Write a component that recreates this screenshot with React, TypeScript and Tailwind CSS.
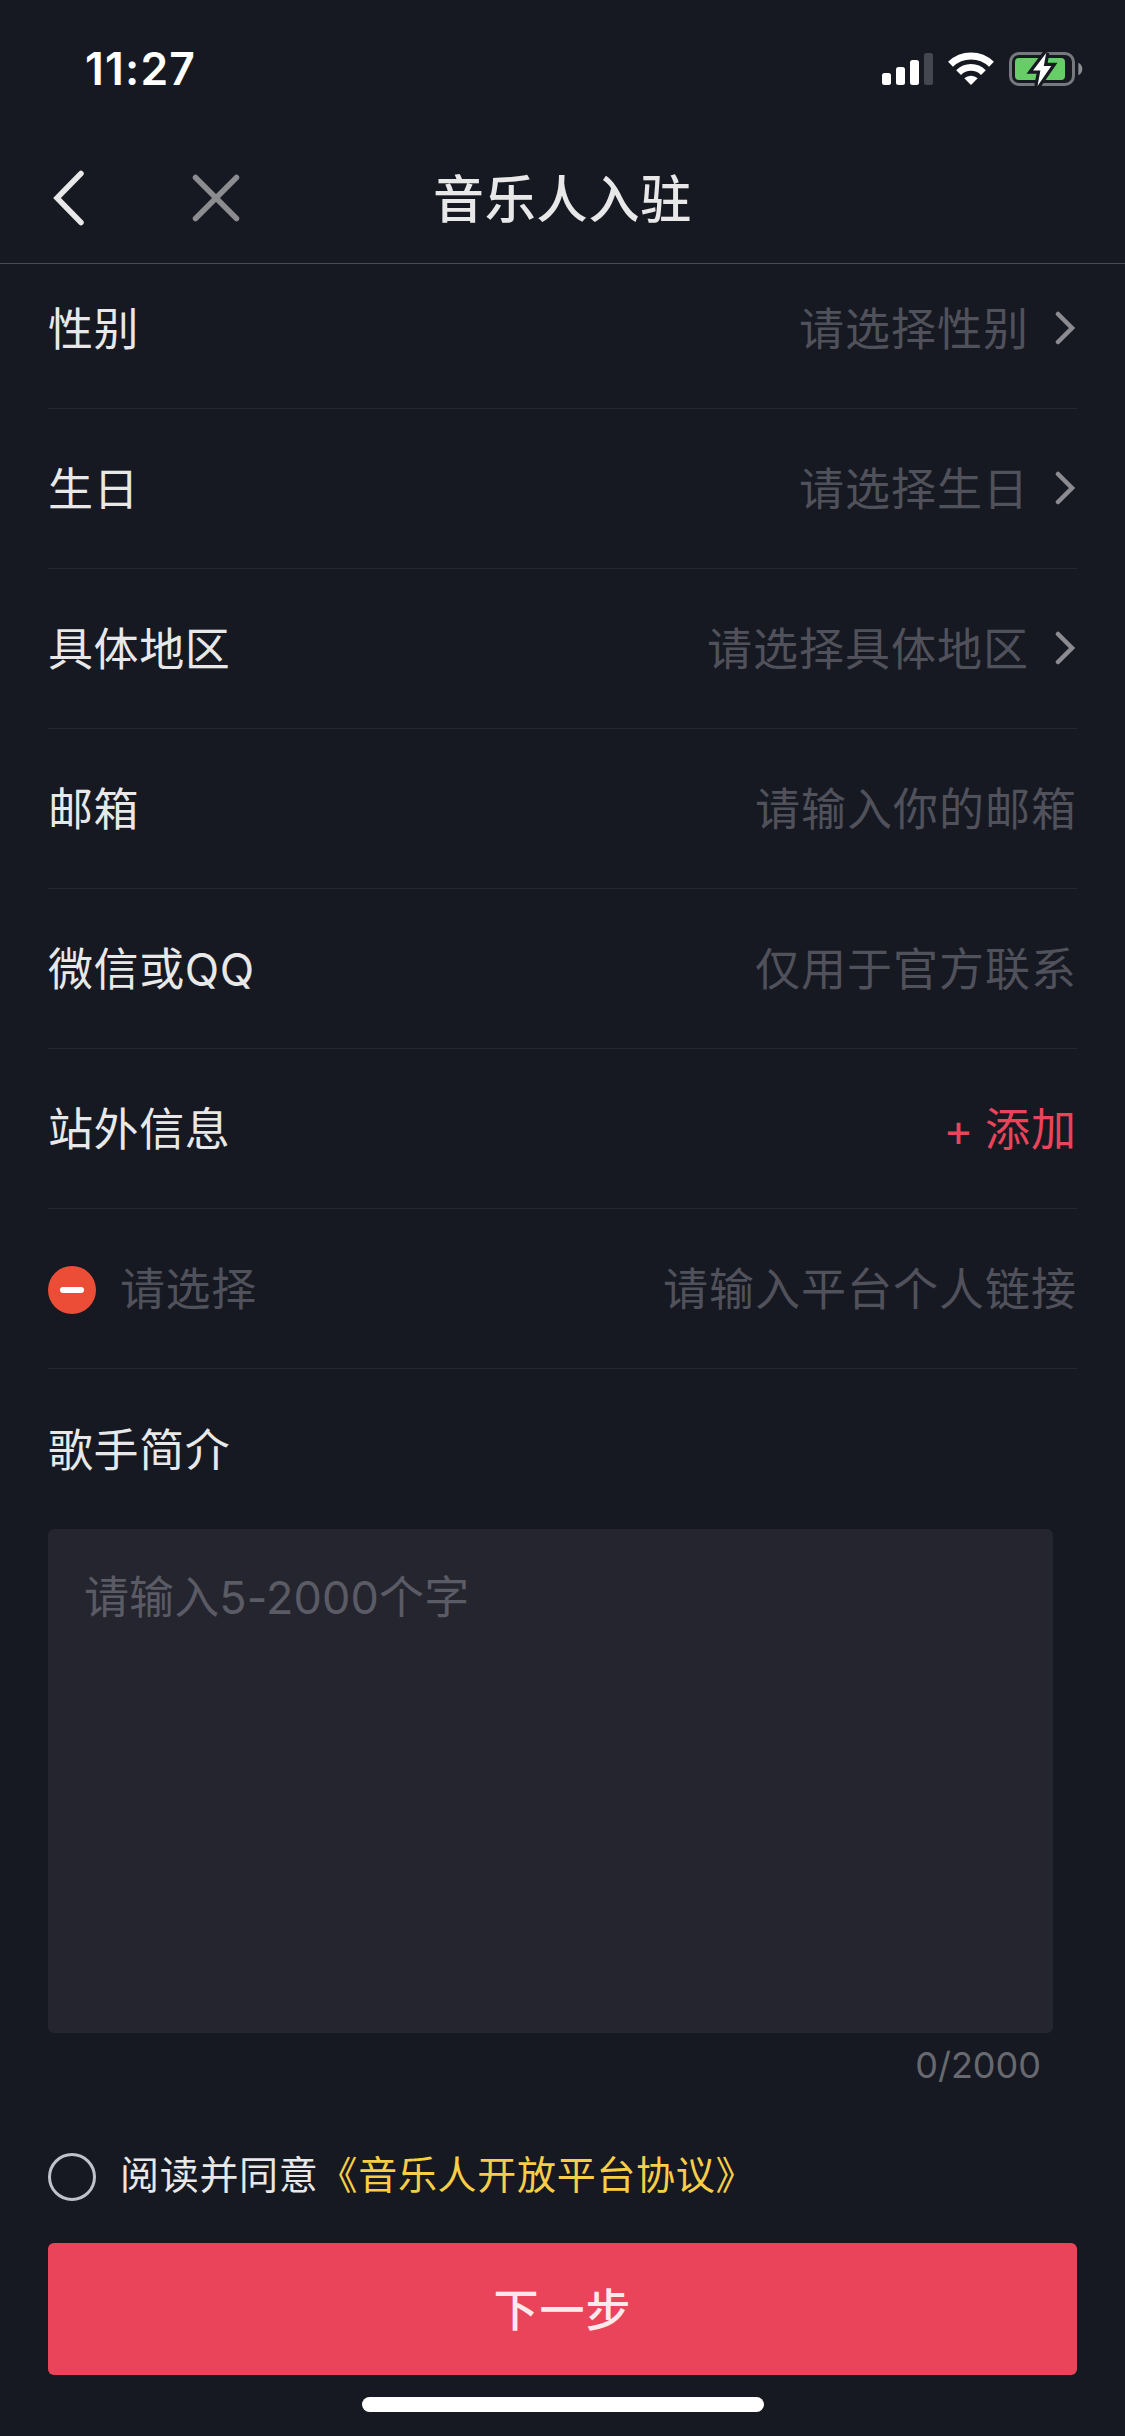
import { useState } from 'react';
import type { ReactNode } from 'react';

const MAX_LENGTH = 2000;

interface FormRowProps {
  label: string;
  children: ReactNode;
}

interface TextFieldProps {
  name: string;
  placeholder: string;
}

function StatusIcons() {
  return (
    <svg width="204" height="36" viewBox="881 51 204 36" fill="none">
      {/* Signal */}
      <rect x="882" y="73" width="9" height="12" rx="2.5" fill="#fff" />
      <rect x="896" y="67" width="9" height="18" rx="2.5" fill="#fff" />
      <rect x="910" y="60" width="9" height="25" rx="2.5" fill="#fff" />
      <rect x="924" y="53" width="9" height="32" rx="2.5" fill="#45464f" />

      {/* Wifi */}
      <path d="M950.5 64.2a29.5 29.5 0 0 1 41 0" stroke="#fff" strokeWidth="7" />
      <path d="M958.6 72.6a17.5 17.5 0 0 1 24.8 0" stroke="#fff" strokeWidth="6.8" />
      <path d="M964.3 78.3a10 10 0 0 1 13.4 0L971 85z" fill="#fff" />

      {/* Battery */}
      <rect x="1010.5" y="53.5" width="63" height="31" rx="8.5" stroke="#77797f" strokeWidth="3" />
      <rect x="1015" y="58" width="50" height="22" rx="4" fill="#67ce67" />
      <path d="M1078.3 62.7c2.6 1.2 4 3.6 4 6.3s-1.4 5.1-4 6.3z" fill="#8c8d92" />
      <path
        d="M1046.2 53 1033 70.5h7.4L1037.5 86 1051.3 66h-7.5z"
        fill="#fff"
        stroke="#161922"
        strokeWidth="6.5"
      />
      <path d="M1046.2 53 1033 70.5h7.4L1037.5 86 1051.3 66h-7.5z" fill="#fff" />
    </svg>
  );
}

function ChevronRight() {
  return (
    <svg width="22" height="36" viewBox="0 0 22 36" fill="none" className="ml-[26px] -mt-[5px]">
      <path d="M3 4l14 14L3 32" stroke="#8b8b90" strokeWidth="4.5" strokeLinecap="round" />
    </svg>
  );
}

function FormRow({ label, children }: FormRowProps) {
  return (
    <div className="flex h-[160px] items-center justify-between border-b border-[#252730] pt-[3px]">
      <span className="text-[#e8e8e9]">{label}</span>
      {children}
    </div>
  );
}

function SelectField({ placeholder }: { placeholder: string }) {
  return (
    <button type="button" className="flex items-center tracking-[1px] text-[#50515a]">
      {placeholder}
      <ChevronRight />
    </button>
  );
}

function TextField({ name, placeholder }: TextFieldProps) {
  return (
    <input
      name={name}
      type="text"
      placeholder={placeholder}
      className="w-[600px] bg-transparent text-right tracking-[1px] text-[#e8e8e9] placeholder-[#50515a] outline-none"
    />
  );
}

export default function App() {
  const [intro, setIntro] = useState('');
  const [agreed, setAgreed] = useState(false);

  return (
    <div className="flex h-[2436px] w-[1125px] flex-col overflow-hidden bg-[#161922] font-['Inter','Noto_Sans_CJK_SC',sans-serif] text-[45px] leading-[66px] tracking-[0.6px]">
      {/* Status bar */}
      <div className="flex h-[132px] shrink-0 items-center justify-between pr-10 pl-[85px] pt-[6px]">
        <span className="text-[44.5px] font-semibold tracking-[1.2px] text-white">11:27</span>
        <StatusIcons />
      </div>

      {/* Header */}
      <header className="z-10 grid h-[132px] shrink-0 grid-cols-[1fr_auto_1fr] items-center border-b border-[#4a4c54] bg-[#161922]">
        <div className="flex items-center gap-[103px] pl-[50px]">
          <button type="button" aria-label="返回">
            <svg width="38" height="60" viewBox="0 0 38 60" fill="none">
              <path d="M31 5.5 7 30l24 24.5" stroke="#e8e8e9" strokeWidth="5.5" strokeLinecap="round" />
            </svg>
          </button>
          <button type="button" aria-label="关闭">
            <svg width="50" height="50" viewBox="0 0 50 50" fill="none">
              <path d="M4.5 4.5l41 41M45.5 4.5l-41 41" stroke="#8b8b90" strokeWidth="5.5" strokeLinecap="round" />
            </svg>
          </button>
        </div>
        <h1 className="pt-[5px] text-[51px] font-medium tracking-[0.8px] text-[#e8e8e9]">音乐人入驻</h1>
      </header>

      {/* Form, scrolled a little way under the header */}
      <main className="-mt-[15px] shrink-0 px-12">
        <FormRow label="性别">
          <SelectField placeholder="请选择性别" />
        </FormRow>
        <FormRow label="生日">
          <SelectField placeholder="请选择生日" />
        </FormRow>
        <FormRow label="具体地区">
          <SelectField placeholder="请选择具体地区" />
        </FormRow>
        <FormRow label="邮箱">
          <TextField name="email" placeholder="请输入你的邮箱" />
        </FormRow>
        <FormRow label="微信或QQ">
          <TextField name="contact" placeholder="仅用于官方联系" />
        </FormRow>
        <FormRow label="站外信息">
          <button type="button" className="tracking-[1px] text-[#ea445a] [word-spacing:-3px]">
            + 添加
          </button>
        </FormRow>

        {/* External link */}
        <div className="flex h-[160px] items-center border-b border-[#252730] pt-[3px]">
          <button
            type="button"
            aria-label="删除"
            className="flex size-12 items-center justify-center rounded-full bg-[#eb4d36]"
          >
            <span className="h-[6px] w-6 rounded-full bg-white" />
          </button>
          <span className="ml-6 flex-1 text-[#50515a]">请选择</span>
          <TextField name="link" placeholder="请输入平台个人链接" />
        </div>

        {/* Intro */}
        <label htmlFor="intro" className="flex h-[160px] items-center pt-[3px] text-[#e8e8e9]">
          歌手简介
        </label>
        <textarea
          id="intro"
          value={intro}
          maxLength={MAX_LENGTH}
          onChange={(e) => setIntro(e.target.value)}
          placeholder="请输入5-2000个字"
          className="block h-[504px] w-[1005px] resize-none rounded-md bg-[#25252f] px-9 py-[36px] tracking-[0.1px] text-[#e8e8e9] placeholder-[#5a5b65] outline-none"
        />
        <p className="mr-9 mt-2 text-right text-[36px] leading-[48px] tracking-[0px] text-[#68696f]">
          {intro.length}/{MAX_LENGTH}
        </p>
      </main>

      {/* Agreement */}
      <footer className="mt-14 flex flex-col px-12">
        <div className="flex h-[64px] items-center text-[39px] leading-[60px] tracking-[0.7px]">
          <button
            type="button"
            role="checkbox"
            aria-checked={agreed}
            aria-label="同意协议"
            onClick={() => setAgreed(!agreed)}
            className={`size-12 rounded-full border-[3px] border-[#bfc1cb] ${agreed ? 'bg-[#ea445a]' : ''}`}
          />
          <p className="mb-[4px] ml-6 text-[#e8e8e9]">
            阅读并同意<a href="#" className="text-[#f8ce46]">《音乐人开放平台协议》</a>
          </p>
        </div>
        <button
          type="button"
          className="mt-[34px] h-[132px] rounded-md bg-[#ea445a] pt-[3px] font-medium tracking-[1px] text-[#fde9ec]"
        >
          下一步
        </button>
        <div className="mt-[22px] h-[15px] w-[402px] self-center rounded-full bg-white" />
      </footer>
    </div>
  );
}
